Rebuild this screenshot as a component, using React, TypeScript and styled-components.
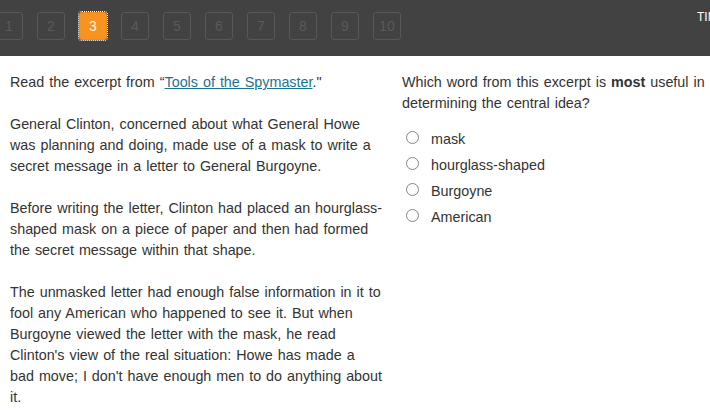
import styled, { createGlobalStyle } from 'styled-components';

const GlobalStyle = createGlobalStyle`
  html, body {
    margin: 0;
    padding: 0;
    background: #ffffff;
    overflow: hidden;
  }
  body {
    font-family: "Liberation Sans", Arial, sans-serif;
    color: #333333;
  }
`;

const pages = [1, 2, 3, 4, 5, 6, 7, 8, 9, 10];
const atual = 3;

const options = ['mask', 'hourglass-shaped', 'Burgoyne', 'American'];

const Pagina = styled.div`
  width: 710px;
  height: 419px;
  overflow: hidden;
`;

const Barra = styled.div`
  height: 56px;
  background-color: #424242;
  display: flex;
  align-items: flex-start;
  overflow: hidden;
`;

const Lista = styled.div`
  display: flex;
  gap: 14px;
  margin-left: -5px;
  margin-top: 12px;
`;

const Botao = styled.div<{ $ativo: boolean }>`
  width: 28px;
  height: 28px;
  box-sizing: border-box;
  border: 1px solid ${({ $ativo }) => ($ativo ? '#f28a1c' : '#575757')};
  border-radius: 3px;
  background-color: ${({ $ativo }) => ($ativo ? '#f7931e' : 'transparent')};
  color: ${({ $ativo }) => ($ativo ? '#fff3e2' : '#5a5a5a')};
  outline: ${({ $ativo }) => ($ativo ? '1px dotted #ffffff' : 'none')};
  outline-offset: 0;
  font-size: 14px;
  display: flex;
  align-items: center;
  justify-content: center;
  flex-shrink: 0;
`;

const Espaco = styled.div`
  flex: 1;
`;

const Relogio = styled.div`
  width: 13px;
  flex-shrink: 0;
  overflow: hidden;
  white-space: nowrap;
  color: #ffffff;
  font-size: 12px;
  margin-top: 10px;
`;

const Conteudo = styled.div`
  display: flex;
  padding-top: 16px;
  font-size: 14.33px;
  word-spacing: 1px;
  line-height: 21px;
`;

const Texto = styled.div`
  width: 372.7px;
  padding-left: 10px;
  flex-shrink: 0;
`;

const Paragrafo = styled.p`
  margin: 0 0 21px 0;
`;

const Link = styled.a`
  color: #1b7490;
  text-decoration: underline;
`;

const Pergunta = styled.div`
  margin-left: 19.3px;
  width: 306px;
  flex-shrink: 0;
`;

const Enunciado = styled.div`
  margin-bottom: 12px;
`;

const Opcao = styled.label`
  display: flex;
  align-items: center;
  height: 26px;
  gap: 12px;
`;

const Radio = styled.span`
  width: 13px;
  height: 13px;
  box-sizing: border-box;
  border: 1px solid #858585;
  border-radius: 50%;
  background: #ffffff;
  margin-left: 4px;
  margin-top: -3px;
  flex-shrink: 0;
`;

export default function App() {
  return (
    <Pagina>
      <GlobalStyle />
      <Barra>
        <Lista>
          {pages.map((n) => (
            <Botao key={n} $ativo={n === atual}>
              {n}
            </Botao>
          ))}
        </Lista>
        <Espaco />
        <Relogio>TIME</Relogio>
      </Barra>
      <Conteudo>
        <Texto>
          <Paragrafo>
            Read the excerpt from “<Link href="#">Tools of the Spymaster</Link>."
          </Paragrafo>
          <Paragrafo>
            General Clinton, concerned about what General Howe was planning and doing, made use
            of a mask to write a secret message in a letter to General Burgoyne.
          </Paragrafo>
          <Paragrafo>
            Before writing the letter, Clinton had placed an hourglass-shaped mask on a piece of
            paper and then had formed the secret message within that shape.
          </Paragrafo>
          <Paragrafo>
            The unmasked letter had enough false information in it to fool any American who
            happened to see it. But when Burgoyne viewed the letter with the mask, he read
            Clinton's view of the real situation: Howe has made a bad move; I don't have enough
            men to do anything about it.
          </Paragrafo>
        </Texto>
        <Pergunta>
          <Enunciado>
            Which word from this excerpt is <b>most</b> useful in determining the central idea?
          </Enunciado>
          {options.map((o) => (
            <Opcao key={o}>
              <Radio />
              {o}
            </Opcao>
          ))}
        </Pergunta>
      </Conteudo>
    </Pagina>
  );
}
